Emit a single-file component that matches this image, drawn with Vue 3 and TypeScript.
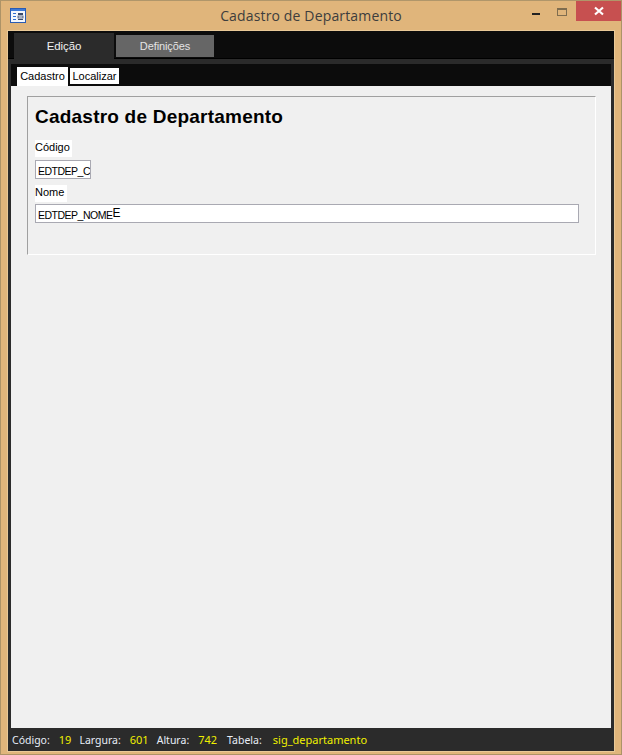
<template>
  <div class="window">
    <header class="titlebar">
      <svg class="app-icon" width="16" height="15" viewBox="0 0 16 15">
        <rect x="0.5" y="0.5" width="15" height="14" fill="#f4f7fc" stroke="#2a5cb4" />
        <rect x="1" y="1" width="14" height="2" fill="#3f7ad6" />
        <rect x="3" y="5" width="3" height="1" fill="#2f6fd0" />
        <rect x="3" y="8" width="3" height="1" fill="#2f6fd0" />
        <rect x="3" y="11" width="3" height="1" fill="#2f6fd0" />
        <rect x="8" y="5" width="5" height="2" fill="#39496b" />
        <rect x="8" y="8" width="5" height="2" fill="#f4f7fc" stroke="#39496b" stroke-width="0.8" />
        <rect x="8" y="11" width="5" height="1" fill="#39496b" />
      </svg>
      <span class="window-title">Cadastro de Departamento</span>
      <div class="controls">
        <span class="minimize"></span>
        <span class="maximize"></span>
        <button class="close">
          <svg width="12" height="10" viewBox="0 0 12 10">
            <path d="M2 1.5 L10 8.5 M10 1.5 L2 8.5" stroke="#fff" stroke-width="2.2" fill="none" />
          </svg>
        </button>
      </div>
    </header>

    <div class="client">
      <nav class="main-tabs">
        <div class="main-tab active">Edição</div>
        <div class="main-tab">Definições</div>
      </nav>
      <div class="band">
        <nav class="sub-tabs">
          <div class="sub-tab active">Cadastro</div>
          <div class="sub-tab">Localizar</div>
        </nav>
        <main class="content">
          <section class="group">
            <h1>Cadastro de Departamento</h1>
            <label class="caption code">Código</label>
            <div class="field short"><span class="name">EDTDEP_C</span></div>
            <label class="caption nome">Nome</label>
            <div class="field wide"><span class="name">EDTDEP_NOME</span><span class="value">E</span></div>
          </section>
        </main>
      </div>
      <footer class="status">
        <template v-for="item in stats" :key="item.label">
          <span class="stat-label">{{ item.label }}:</span>
          <span class="stat-value">{{ item.value }}</span>
        </template>
      </footer>
    </div>
  </div>
</template>

<script setup lang="ts">
interface Stat {
  label: string
  value: string
}

const stats: Stat[] = [
  { label: 'Código', value: '19' },
  { label: 'Largura', value: '601' },
  { label: 'Altura', value: '742' },
  { label: 'Tabela', value: 'sig_departamento' }
]
</script>

<style>
html,
body {
  margin: 0;
  background: #e0b57b;
}
</style>

<style scoped>
.window {
  box-sizing: border-box;
  width: 622px;
  height: 755px;
  display: flex;
  flex-direction: column;
  background: #e0b57b;
  border: 1px solid #ad9367;
  border-top-color: #b0966a;
  padding: 0 7px 3px 7px;
  font-family: "Liberation Sans", Arial, sans-serif;
}

.titlebar {
  box-sizing: border-box;
  height: 30px;
  padding-bottom: 2px;
  flex-shrink: 0;
  position: relative;
  display: flex;
  align-items: center;
  justify-content: center;
}

.app-icon {
  position: absolute;
  left: 2px;
  top: 7px;
}

.window-title {
  font-family: "Open Sans", sans-serif;
  font-size: 14px;
  letter-spacing: 0.15px;
  color: #3d3d3d;
}

.controls {
  position: absolute;
  right: -7px;
  top: 0;
  width: 95px;
  height: 21px;
}

.minimize {
  position: absolute;
  left: 6px;
  top: 12px;
  width: 8px;
  height: 2px;
  background: #222;
}

.maximize {
  position: absolute;
  left: 31px;
  top: 7px;
  box-sizing: border-box;
  width: 10px;
  height: 8px;
  border: 1px solid #7f6d4f;
  border-top-width: 2px;
}

.close {
  position: absolute;
  left: 50px;
  top: 0;
  width: 45px;
  height: 20px;
  padding: 0;
  border: none;
  background: #c75050;
  display: flex;
  align-items: center;
  justify-content: center;
}

.client {
  flex: 1;
  min-height: 0;
  display: flex;
  flex-direction: column;
  background: #2b2b2b;
  outline: 1px solid #e9c998;
}

.main-tabs {
  height: 28px;
  flex-shrink: 0;
  display: flex;
  align-items: flex-end;
  gap: 2px;
  padding-left: 6px;
  box-sizing: border-box;
  background: #0c0c0c;
  border-bottom: 1px solid #000;
}

.main-tab {
  box-sizing: border-box;
  width: 98px;
  height: 22px;
  margin-bottom: 1px;
  display: flex;
  align-items: center;
  justify-content: center;
  font-size: 11px;
  letter-spacing: -0.1px;
  color: #e4e4e4;
  background: #666;
}

.main-tab.active {
  width: 100px;
  height: 26px;
  margin-bottom: -1px;
  padding-bottom: 1px;
  background: #2b2b2b;
  color: #f0f0f0;
  font-size: 11.5px;
}

.band {
  flex: 1;
  min-height: 0;
  display: flex;
  flex-direction: column;
  margin: 5px 3px 0;
}

.sub-tabs {
  height: 22px;
  flex-shrink: 0;
  box-sizing: border-box;
  display: flex;
  align-items: flex-end;
  gap: 2px;
  padding-left: 6px;
  background: #0c0c0c;
}

.sub-tab {
  box-sizing: border-box;
  width: 49px;
  height: 16px;
  margin-bottom: 2px;
  background: #fff;
  color: #000;
  font-size: 11px;
  line-height: 16px;
  text-align: center;
}

.sub-tab.active {
  width: 51px;
  height: 19px;
  margin-bottom: 0;
  line-height: 19px;
}

.content {
  flex: 1;
  min-height: 0;
  padding: 10px 15px 0 16px;
  background: #f0f0f0;
}

.group {
  box-sizing: border-box;
  height: 159px;
  padding: 9px 16px 0 7px;
  border: 1px solid #fff;
  border-top-color: #a0a0a0;
  border-left-color: #a0a0a0;
}

h1 {
  margin: 0 0 12px;
  font-size: 19px;
  line-height: 22px;
  font-weight: 700;
  letter-spacing: 0.22px;
  color: #000;
}

.caption {
  display: block;
  height: 17px;
  line-height: 14px;
  font-size: 11px;
  background: #fff;
  color: #000;
}

.code {
  width: 37px;
}

.nome {
  width: 32px;
  margin-top: 6px;
}

.field {
  box-sizing: border-box;
  height: 19px;
  display: flex;
  align-items: center;
  padding: 2px 0 0 2px;
  overflow: hidden;
  white-space: nowrap;
  background: #fff;
  border: 1px solid #a9a9b2;
  font-size: 10.5px;
  letter-spacing: -0.5px;
  color: #000;
}

.field.short {
  width: 56px;
  margin-top: 3px;
}

.field.wide {
  width: 544px;
  margin-top: 2px;
}

.value {
  margin-left: 0;
  font-size: 12px;
  letter-spacing: 0;
  position: relative;
  top: -2px;
}

.status {
  height: 23px;
  flex-shrink: 0;
  display: flex;
  align-items: center;
  padding-left: 4px;
  background: #2b2b2b;
  font-family: "Noto Sans", sans-serif;
  font-size: 11px;
  white-space: nowrap;
}

.stat-label {
  color: #e8eef8;
  font-size: 10.5px;
  margin-right: 9px;
}

.stat-value {
  color: #f0f000;
  margin-right: 8px;
}

.stat-label:nth-last-child(2) {
  margin-left: 2px;
  margin-right: 11px;
}
</style>
